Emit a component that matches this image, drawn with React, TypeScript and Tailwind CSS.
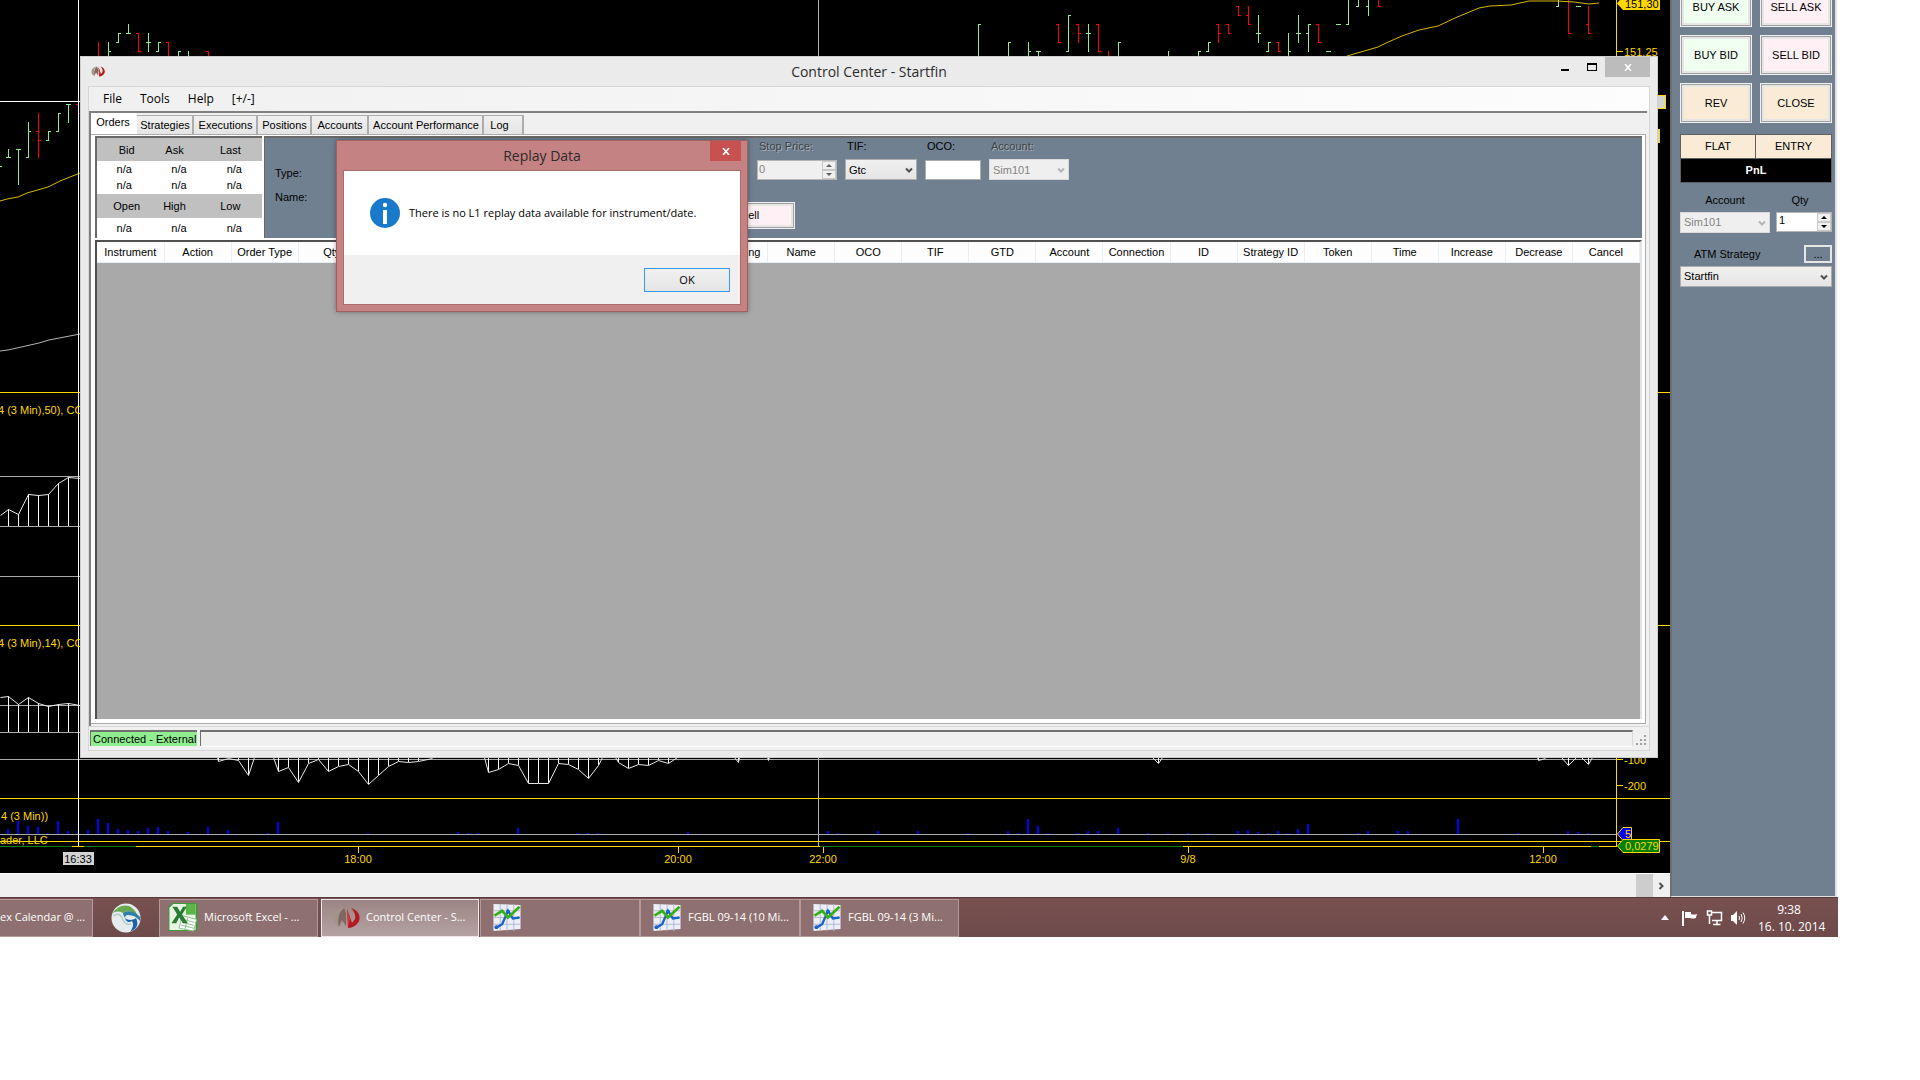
import React from "react";

type Bar = [number, number, number, number | null, number | null, "g" | "r"];

/* x, high, low, open tick, close tick, direction */
const BARS: Bar[] = [
  [-1, 166, 167, null, 166, "g"],
  [8, 149, 158, 157, 157, "g"],
  [18, 149, 185, 149, 149, "g"],
  [28, 122, 158, 157, 131, "g"],
  [38, 113, 158, 131, 140, "r"],
  [48, 131, 141, 140, 131, "g"],
  [58, 113, 132, 131, 113, "g"],
  [68, 104, 123, 104, 104, "g"],
  [78, 104, 113, 104, 113, "r"],
  [98, 42, 58, null, null, "r"],
  [108, 42, 58, null, 51, "g"],
  [118, 33, 43, 42, 33, "g"],
  [128, 24, 34, 33, 33, "g"],
  [138, 33, 52, 33, 51, "r"],
  [148, 33, 52, 42, 42, "g"],
  [158, 42, 52, 51, 42, "g"],
  [168, 42, 58, 42, null, "r"],
  [178, 51, 58, null, 51, "g"],
  [188, 51, 58, null, null, "g"],
  [208, 51, 58, 51, null, "r"],
  [978, 24, 58, null, 24, "g"],
  [1008, 42, 58, null, 42, "g"],
  [1028, 42, 58, null, 51, "g"],
  [1038, 51, 58, 51, 51, "g"],
  [1058, 24, 43, 24, 42, "r"],
  [1068, 15, 52, 51, 15, "g"],
  [1078, 24, 43, 24, 33, "r"],
  [1088, 24, 52, 33, 33, "g"],
  [1098, 24, 52, 24, 51, "r"],
  [1108, 51, 58, null, null, "r"],
  [1118, 42, 58, null, 42, "g"],
  [1168, 51, 58, null, null, "g"],
  [1198, 51, 58, null, 51, "g"],
  [1208, 42, 52, 51, 42, "g"],
  [1218, 24, 43, 24, 33, "r"],
  [1228, 24, 34, 24, 33, "r"],
  [1238, 6, 16, 6, 15, "r"],
  [1248, 6, 25, 15, 24, "r"],
  [1258, 15, 43, 33, 33, "g"],
  [1268, 42, 52, 51, 42, "g"],
  [1278, 42, 52, 42, 51, "r"],
  [1288, 33, 58, null, 51, "g"],
  [1298, 15, 43, 33, 33, "g"],
  [1308, 24, 52, 33, 24, "g"],
  [1318, 24, 43, 24, 42, "r"],
  [1328, 51, 52, 51, 51, "g"],
  [1338, 24, 25, 24, 24, "g"],
  [1348, -5, 25, 24, null, "g"],
  [1358, -5, 7, 6, null, "g"],
  [1368, -5, 16, 6, null, "g"],
  [1378, -5, 7, null, 6, "r"],
  [1558, -5, 7, 6, null, "g"],
  [1568, -5, 34, null, 33, "r"],
  [1578, 6, 7, 6, 6, "g"],
  [1588, 6, 34, 24, 33, "r"],
];

const VOLUME: [number, number][] = [
  [8, 5], [18, 13], [28, 8], [38, 7], [48, 1], [58, 13], [68, 3], [78, 3], [88, 4], [98, 15],
  [108, 11], [118, 5], [128, 4], [138, 3], [148, 6], [158, 7], [168, 3], [188, 2], [208, 7], [228, 4],
  [268, 1], [278, 12], [368, 1], [458, 2], [468, 1], [478, 1], [518, 6], [578, 1], [588, 1], [598, 1],
  [688, 2], [828, 3], [838, 1], [878, 3], [918, 3], [968, 1], [1008, 3], [1018, 1], [1028, 15], [1038, 8],
  [1048, 1], [1078, 1], [1088, 3], [1098, 3], [1118, 6], [1148, 1], [1168, 1], [1188, 1], [1208, 1],
  [1238, 3], [1248, 4], [1258, 2], [1268, 1], [1278, 3], [1288, 1], [1298, 5], [1308, 10], [1358, 1],
  [1368, 3], [1398, 3], [1408, 3], [1458, 15], [1518, 1], [1568, 3], [1578, 2], [1588, 1],
];

type Pt = [number, number];

const UPPER: Pt[] = [[0, 515], [8, 509], [18, 514], [28, 494], [38, 495], [48, 494], [58, 483], [68, 477], [80, 478]];
const MIDDLE: Pt[] = [[0, 697], [8, 696], [18, 704], [28, 697], [38, 703], [48, 706], [58, 704], [68, 703], [80, 705]];
const LOWER: Pt[][] = [
  [[217, 757], [218, 761], [228, 758], [238, 760], [248, 775], [254, 757]],
  [[273, 757], [278, 771], [288, 767], [298, 782], [308, 763], [318, 759], [328, 771], [338, 766], [348, 764], [358, 771], [368, 784], [378, 775], [388, 766], [398, 761], [408, 762], [418, 761], [432, 758]],
  [[484, 757], [488, 772], [498, 769], [508, 763], [518, 765], [528, 783], [538, 783], [548, 783], [558, 763], [568, 764], [578, 769], [588, 778], [598, 765], [602, 757]],
  [[615, 757], [618, 762], [628, 768], [638, 764], [648, 765], [658, 760], [668, 763], [677, 757]],
  [[734, 757], [738, 762], [739, 757]],
  [[767, 757], [768, 760], [769, 757]],
  [[1152, 757], [1158, 763], [1162, 757]],
  [[1537, 757], [1538, 760], [1545, 758]],
  [[1561, 757], [1568, 765], [1576, 757]],
  [[1581, 757], [1588, 764], [1592, 757]],
];

const TIMES: [number, string][] = [[358, "18:00"], [678, "20:00"], [823, "22:00"], [1188, "9/8"], [1543, "12:00"]];

const points = (list: Pt[]) => list.map(([x, y]) => `${x + 0.5},${y + 0.5}`).join(" ");

function Stems({ list, base }: { list: Pt[]; base: number }) {
  return (
    <>
      {list
        .filter(([x]) => x % 10 === 8)
        .map(([x, y]) => (
          <rect key={x} x={x} y={Math.min(y, base)} width="1" height={Math.abs(base - y)} fill="#fff" />
        ))}
    </>
  );
}

function Chart() {
  return (
    <svg
      className="block h-full w-full"
      viewBox="0 0 1670 873"
      preserveAspectRatio="xMinYMin slice"
      fontFamily='"Liberation Sans", Arial, sans-serif'
      fontSize="11"
      fill="#ffd700"
      aria-label="Price chart"
    >
      <rect width="1670" height="873" fill="#000" />
      <g shapeRendering="crispEdges">
        {BARS.map(([x, hi, lo, open, close, dir]) => {
          const fill = dir === "g" ? "#90ee90" : "#ff0000";
          return (
            <g key={x} fill={fill}>
              <rect x={x} y={hi} width="1" height={lo - hi} />
              {open !== null && <rect x={x - 2} y={open} width="3" height="1" />}
              {close !== null && <rect x={x} y={close} width="3" height="1" />}
            </g>
          );
        })}
        <rect x="818" y="0" width="1" height="846" fill="#b4b4b4" />
        <rect x="0" y="392" width="1670" height="1" />
        <rect x="0" y="625" width="1670" height="1" />
        {[476, 526, 576, 705, 732, 759, 834].map((y) => (
          <rect key={y} x="0" y={y} width="1616" height="1" fill="#a9a9a9" />
        ))}
        <Stems list={UPPER} base={526} />
        <Stems list={MIDDLE} base={732} />
        {LOWER.map((list, i) => (
          <Stems key={i} list={list} base={757} />
        ))}
        {VOLUME.map(([x, h]) => (
          <rect key={x} x={x - 1} y={834 - h} width="2" height={h} fill="#0000ff" />
        ))}
      </g>
      <g fill="none" stroke="#e6e6e6">
        <polyline points={points(UPPER)} />
        <polyline points={points(MIDDLE)} />
        {LOWER.map((list, i) => (
          <polyline key={i} points={points(list)} />
        ))}
        <polyline points="0,351 8,350 39,343 49,340 80,334" stroke="#b4b4b4" />
        <polyline points="0,201 7,199 18,197 27,193 48,187 60,181 80,173" stroke="#d8b800" />
        <polyline
          points="1347,56 1378,47 1386,43 1402,36 1419,30 1438,26 1455,18 1479,8 1490,6 1511,5 1529,1 1557,1 1574,2 1589,4 1599,3"
          stroke="#d8b800"
        />
      </g>
      <g shapeRendering="crispEdges">
        <rect x="0" y="798" width="1670" height="1" />
        <rect x="0" y="841" width="1670" height="1" />
        <rect x="0" y="846" width="1617" height="1" />
        <rect x="0" y="846" width="72" height="1" fill="#008000" />
        <rect x="84" y="846" width="52" height="1" fill="#008000" />
        <rect x="820" y="846" width="363" height="1" fill="#008000" />
        <rect x="1591" y="846" width="8" height="1" fill="#008000" />
        <rect x="1616" y="0" width="1" height="847" />
        {[51, 759, 785].map((y) => (
          <rect key={y} x="1617" y={y} width="6" height="1" />
        ))}
        {TIMES.map(([x]) => (
          <rect key={x} x={x} y="847" width="1" height="6" />
        ))}
        <rect x="78" y="0" width="1" height="846" fill="#fff" />
        <rect x="0" y="101" width="1616" height="1" fill="#fff" />
        <rect x="1640" y="95" width="25" height="13" fill="#d3d3d3" stroke="#ffd700" />
        <rect x="1640" y="129" width="19" height="13" fill="#d3d3d3" stroke="#ffd700" />
        <rect x="63" y="852" width="31" height="13" fill="#d3d3d3" />
      </g>
      <path d="M1617 3.500L1623 -4H1660V10H1623Z" />
      <path d="M1617.500 834L1623 827.500H1631.500V840.500H1623Z" fill="#0000ff" stroke="#ffd700" />
      <path d="M1617.500 846L1623 839.500H1659.500V852.500H1623Z" fill="#008000" stroke="#ffd700" />
      <text x="1625" y="8" fill="#000">151,30</text>
      <text x="1624" y="56">151,25</text>
      <text x="1624" y="764">-100</text>
      <text x="1624" y="790">-200</text>
      <text x="1625" y="838">5</text>
      <text x="1625" y="850">0,0279</text>
      <text x="-2" y="414">4 (3 Min),50), CO</text>
      <text x="-2" y="647">4 (3 Min),14), CO</text>
      <text x="1" y="820">4 (3 Min))</text>
      <text x="0" y="844">ader, LLC</text>
      <text x="78" y="863" textAnchor="middle" fill="#000">16:33</text>
      {TIMES.map(([x, label]) => (
        <text key={x} x={x} y="863" textAnchor="middle">{label}</text>
      ))}
    </svg>
  );
}

function NinjaLogo({ className }: { className: string }) {
  return (
    <svg viewBox="0 0 28 22" className={className} aria-hidden="true">
      <path d="M7 20C1 17 -1 11 3 6C5 3 8 1 12 1C7 4 4 10 7 20Z" fill="#a3948b" />
      <path d="M12 1L14 6V19L10 13L7 20C5 12 7 5 12 1Z" fill="#7c6a60" />
      <path d="M15 2L20 16L23 12C24 8 22 4 19 1C26 3 29 9 27 14C25 18 21 21 16 21Z" fill="#b5191f" />
      <path d="M15 2L18 12L16 21Z" fill="#d83a3e" />
    </svg>
  );
}

function Chevron({ className }: { className: string }) {
  return (
    <svg viewBox="0 0 8 7" className={className} aria-hidden="true">
      <path d="M1 1.500L4 4.500L7 1.500" fill="none" stroke="currentColor" strokeWidth="2" />
    </svg>
  );
}

function Select({ id, value, disabled }: { id: string; value: string; disabled?: boolean }) {
  return (
    <div className={disabled ? "relative text-[#b4b4b4]" : "relative text-[#505050]"}>
      <select
        id={id}
        disabled={disabled}
        defaultValue={value}
        className={
          disabled
            ? "block h-[21px] w-full appearance-none border border-[#d9d9d9] bg-[#efefef] pl-[3px] text-[11px] text-[#838383] opacity-100"
            : "block h-[21px] w-full appearance-none border border-[#acacac] bg-linear-to-b from-[#f0f0f0] to-[#e5e5e5] pl-[3px] text-[11px] text-black"
        }
      >
        <option>{value}</option>
      </select>
      <Chevron className="pointer-events-none absolute top-[8px] right-[4px] h-[7px] w-[8px]" />
    </div>
  );
}

function Spinner({ id, value, disabled }: { id: string; value: string; disabled?: boolean }) {
  return (
    <div
      className={
        disabled
          ? "flex h-[20px] border border-[#b4b4b4] bg-[#f0f0f0] text-[#606060]"
          : "flex h-[20px] border border-[#b4b4b4] bg-white text-black"
      }
    >
      <input
        id={id}
        disabled={disabled}
        defaultValue={value}
        className={disabled ? "min-w-0 flex-1 pb-[3px] pl-px text-[11px] text-[#838383]" : "min-w-0 flex-1 pb-[3px] pl-[2px] text-[11px]"}
      />
      <div className="flex w-[14px] flex-col">
        <button aria-label="Increase" disabled={disabled} className="flex flex-1 items-center justify-center border border-[#c8c8c8] bg-[#f0f0f0]">
          <svg viewBox="0 0 6 3" className="h-[3px] w-[6px]"><path d="M0 3L3 0L6 3Z" fill="currentColor" /></svg>
        </button>
        <button aria-label="Decrease" disabled={disabled} className="flex flex-1 items-center justify-center border border-[#c8c8c8] bg-[#f0f0f0]">
          <svg viewBox="0 0 6 3" className="h-[3px] w-[6px]"><path d="M0 0L3 3L6 0Z" fill="currentColor" /></svg>
        </button>
      </div>
    </div>
  );
}

const TABS: [string, string][] = [
  ["Strategies", "w-[57px]"],
  ["Executions", "w-[64px]"],
  ["Positions", "w-[54px]"],
  ["Accounts", "w-[57px]"],
  ["Account Performance", "w-[115px]"],
  ["Log", "w-[40px]"],
];

const COLUMNS = [
  "Instrument", "Action", "Order Type", "Qty", "", "", "", "", "", "Remaining", "Name", "OCO", "TIF", "GTD",
  "Account", "Connection", "ID", "Strategy ID", "Token", "Time", "Increase", "Decrease", "Cancel",
];

function Quotes() {
  return (
    <table className="h-full w-[167px] shrink-0 table-fixed border-t-2 border-l-2 border-[#696969] bg-white text-center leading-[14px]">
      <tbody>
        <tr className="h-[24px] bg-[#c0c0c0]">
          <th className="pl-[5px] font-normal">Bid</th>
          <th className="pr-[9px] font-normal">Ask</th>
          <th className="pr-[8px] font-normal">Last</th>
        </tr>
        <tr className="h-[16px]"><td>n/a</td><td>n/a</td><td>n/a</td></tr>
        <tr className="h-[16px]"><td>n/a</td><td>n/a</td><td>n/a</td></tr>
        <tr className="h-[24px] bg-[#c0c0c0]">
          <th className="pl-[5px] font-normal">Open</th>
          <th className="pr-[9px] font-normal">High</th>
          <th className="pr-[8px] font-normal">Low</th>
        </tr>
        <tr className="h-[20px]"><td>n/a</td><td>n/a</td><td>n/a</td></tr>
      </tbody>
    </table>
  );
}

function OrderEntry() {
  return (
    <form className="ml-[2px] flex flex-1 border-t-2 border-l border-[#696969] bg-[#708090]" onSubmit={(e) => e.preventDefault()}>
      <div className="flex w-[440px] shrink-0 flex-col gap-[8px] pt-[27px] pl-[10px] leading-4">
        <span>Type:</span>
        <span>Name:</span>
      </div>
      <div>
        <div className="flex items-end gap-[8px] pl-[52px] leading-4">
          <div className="w-[80px]">
            <label htmlFor="stop" className="block pb-[6px] pl-[2px] text-[#404448] [text-shadow:1px_1px_0_#a8b0b8]">Stop Price:</label>
            <Spinner id="stop" value="0" disabled />
          </div>
          <div className="w-[72px]">
            <label htmlFor="tif" className="block pb-[5px] pl-[2px]">TIF:</label>
            <Select id="tif" value="Gtc" />
          </div>
          <div className="w-[56px]">
            <label htmlFor="oco" className="block pb-[6px] pl-[2px]">OCO:</label>
            <input id="oco" className="block h-[20px] w-full border border-[#acacac] bg-white px-1" />
          </div>
          <div className="w-[80px]">
            <label htmlFor="account" className="block pb-[5px] pl-[2px] text-[#404448] [text-shadow:1px_1px_0_#a8b0b8]">Account:</label>
            <Select id="account" value="Sim101" disabled />
          </div>
        </div>
        <button className="mt-[22px] h-[27px] w-[90px] border border-[#f0f0f0] bg-[#fff0f5] shadow-[inset_0_0_0_1px_#a0a0a0,inset_0_0_0_3px_#e6e6e6]">Sell</button>
      </div>
    </form>
  );
}

function ControlCenter() {
  return (
    <section className="absolute top-[56px] right-[12px] bottom-[115px] left-[80px] flex flex-col border border-[#cfcfcf] bg-[#ebebeb] px-[7px] pb-[6px]">
      <header className="grid h-[29px] shrink-0 grid-cols-[1fr_auto_1fr]">
        <NinjaLogo className="mt-[9px] ml-[3px] h-[11px] w-[14px]" />
        <h1 className="pt-[4px] font-['Open_Sans',sans-serif] text-[14px] leading-[22px] text-[#2b2b2b]">Control Center - Startfin</h1>
        <div className="flex items-start justify-end">
          <button aria-label="Minimize" className="flex h-[20px] w-[27px] items-center justify-center">
            <span className="mt-[6px] h-[2px] w-[8px] bg-black" />
          </button>
          <button aria-label="Maximize" className="flex h-[20px] w-[27px] items-center justify-center">
            <span className="h-[8px] w-[10px] border border-t-2 border-black" />
          </button>
          <button aria-label="Close" className="flex h-[20px] w-[45px] items-center justify-center bg-[#bcbcbc]">
            <svg viewBox="0 0 8 7" className="h-[7px] w-[8px]"><path d="M1 0L7 7M7 0L1 7" stroke="#fff" strokeWidth="1.600" /></svg>
          </button>
        </div>
      </header>
      <div className="flex min-h-0 flex-1 flex-col border border-[#d6d6d6] bg-[#f0f0f0]">
        <nav className="flex h-[24px] shrink-0 items-center gap-[18px] bg-linear-to-r from-[#f0f0f0] to-[#fdfdfd] pl-[14px] font-['Open_Sans',sans-serif] text-[12px]">
          <button>File</button>
          <button>Tools</button>
          <button>Help</button>
          <button>[+/-]</button>
        </nav>
        <div className="mr-[2px] flex min-h-0 flex-1 flex-col border-t-2 border-l-2 border-[#808080] pr-px">
          <div role="tablist" className="flex h-[21px] shrink-0 items-end">
            <button role="tab" aria-selected="true" className="h-[21px] w-[46px] bg-white pr-[2px] pb-[3px]">Orders</button>
            {TABS.map(([name, width]) => (
              <button key={name} role="tab" aria-selected="false" className={`${width} h-[19px] border-t border-r-2 border-[#acacac] bg-linear-to-b from-[#f0f0f0] to-[#e5e5e5] pl-px ${name === "Log" ? "pr-[8px]" : ""}`}>
                {name}
              </button>
            ))}
          </div>
          <div className="mb-[2px] flex min-h-0 flex-1 flex-col border-t border-r border-b border-[#acacac] bg-white pt-px pr-[3px] pb-[4px] pl-[4px]">
            <div className="flex h-[102px] shrink-0">
              <Quotes />
              <OrderEntry />
            </div>
            <div className="mt-[2px] min-h-0 flex-1 border-t-2 border-l-2 border-[#505050] border-r-2 border-r-[#e3e3e3] bg-[#a9a9a9]">
              <table className="w-full table-fixed bg-[#fdfdfd] text-center">
                <thead>
                  <tr className="h-[20px] leading-[18px]">
                    {COLUMNS.map((name, i) => (
                      <th key={i} className="border-r border-b border-[#e5eff8] p-0 font-normal whitespace-nowrap">{name}</th>
                    ))}
                  </tr>
                </thead>
              </table>
            </div>
          </div>
        </div>
        <footer className="flex h-[24px] shrink-0 items-start border-t border-[#d8d8d8] pt-[3px] pl-px">
          <span className="h-[16px] w-[107px] border-t-2 border-l border-[#707070] bg-[#90ee90] pl-[2px] leading-[15px] whitespace-nowrap">Connected - External</span>
          <span className="ml-[3px] h-[16px] flex-1 border-t-2 border-r border-l border-[#707070] border-r-[#d8d8d8] bg-[#f0f0f0] shadow-[0_1px_0_#fff]" />
          <svg viewBox="0 0 11 11" className="mt-[5px] mr-[2px] ml-[3px] h-[11px] w-[11px]" fill="#a0a0a0" aria-hidden="true">
            <path d="M8 0h2v2h-2zM8 4h2v2h-2zM4 4h2v2h-2zM8 8h2v2h-2zM4 8h2v2h-2zM0 8h2v2h-2z" />
          </svg>
        </footer>
      </div>
    </section>
  );
}

function ReplayDialog() {
  return (
    <div role="dialog" aria-labelledby="dlg-title" className="absolute top-[140px] left-[336px] w-[412px] border border-[#a06060] bg-[#c58282] px-[6px] pb-[6px] font-['Open_Sans',sans-serif] shadow-[0_0_5px_rgba(0,0,0,0.35)]">
      <header className="relative h-[29px] text-center">
        <h2 id="dlg-title" className="pt-[4px] text-[14px] leading-[22px] text-[#2b2b2b]">Replay Data</h2>
        <button aria-label="Close dialog" className="absolute top-0 right-0 flex h-[20px] w-[31px] items-center justify-center bg-[#c75050]">
          <svg viewBox="0 0 8 7" className="h-[7px] w-[8px]"><path d="M1 0L7 7M7 0L1 7" stroke="#fff" strokeWidth="1.600" /></svg>
        </button>
      </header>
      <div className="border border-[#a86a6a] bg-[#f0f0f0]">
        <div className="flex h-[84px] items-center gap-[9px] bg-white pl-[26px]">
          <svg viewBox="0 0 30 30" className="h-[30px] w-[30px]" aria-hidden="true">
            <circle cx="15" cy="15" r="15" fill="#1979ca" />
            <circle cx="15" cy="7" r="2.200" fill="#fff" />
            <rect x="13" y="12" width="4" height="14" fill="#fff" />
          </svg>
          <p className="text-[11px] whitespace-nowrap">There is no L1 replay data available for instrument/date.</p>
        </div>
        <div className="flex h-[49px] items-start justify-end pt-[13px] pr-[10px]">
          <button className="h-[24px] w-[86px] border border-[#3399ff] bg-linear-to-b from-[#f0f0f0] to-[#e5e5e5] text-[11px]">OK</button>
        </div>
      </div>
    </div>
  );
}

const PAD: [string, string][] = [
  ["BUY ASK", "bg-[#f0fff0]"],
  ["SELL ASK", "bg-[#fff0f5]"],
  ["BUY BID", "bg-[#f0fff0]"],
  ["SELL BID", "bg-[#fff0f5]"],
  ["REV", "bg-[#faebd7]"],
  ["CLOSE", "bg-[#faebd7]"],
];

function TradePanel() {
  return (
    <aside className="mr-px w-[167px] shrink-0 overflow-hidden border-r-2 border-b border-l-2 border-[#e3e3e3] border-l-[#707070] bg-[#708090] pr-[3px] pl-[8px]">
      <div className="-mt-[13px] grid grid-cols-2 gap-[8px]">
        {PAD.map(([name, fill]) => (
          <button key={name} className={`${fill} h-[40px] border border-[#f0f0f0] shadow-[inset_0_0_0_1px_#a0a0a0,inset_0_0_0_3px_#e6e6e6]`}>
            {name}
          </button>
        ))}
      </div>
      <div className="mt-[11px] grid grid-cols-2 border border-[#606060]">
        <button className="h-[23px] border-r border-[#606060] bg-[#faebd7]">FLAT</button>
        <button className="h-[23px] bg-[#faebd7]">ENTRY</button>
        <div className="col-span-2 h-[24px] border-t border-[#606060] bg-black text-center leading-[23px] font-bold text-white">PnL</div>
      </div>
      <div className="mt-[9px] flex justify-between">
        <div className="w-[90px]">
          <label htmlFor="side-account" className="block h-[20px] text-center leading-[17px]">Account</label>
          <Select id="side-account" value="Sim101" disabled />
        </div>
        <div className="w-[56px]">
          <label htmlFor="side-qty" className="block h-[20px] pr-[8px] text-center leading-[17px]">Qty</label>
          <Spinner id="side-qty" value="1" />
        </div>
      </div>
      <div className="mt-[12px] flex items-center justify-between pl-[14px]">
        <label htmlFor="atm">ATM Strategy</label>
        <button className="h-[18px] w-[28px] border-2 border-[#e6e6e6] leading-[12px]">...</button>
      </div>
      <div className="mt-[3px]">
        <Select id="atm" value="Startfin" />
      </div>
    </aside>
  );
}

function ChartIcon() {
  return (
    <svg viewBox="0 0 30 30" className="h-[29px] w-[30px] shrink-0" aria-hidden="true">
      <path d="M1 1L29 2V27L1 29Z" fill="#eceef8" />
      <path d="M1 8H29M1 15H29M1 22H29M8 1V29M15 1V29M22 1V29" stroke="#b4b8d4" fill="none" />
      <path d="M3 26L10 22L16 8L21 16L28 15" stroke="#1c62c8" strokeWidth="2.400" fill="none" />
      <circle cx="4" cy="25" r="2" fill="#1c62c8" />
      <circle cx="16" cy="9" r="2" fill="#1c62c8" />
      <path d="M2 13L10 8L16 15L28 4" stroke="#35b112" strokeWidth="2.800" fill="none" />
    </svg>
  );
}

function ExcelIcon() {
  return (
    <svg viewBox="0 0 30 30" className="h-[29px] w-[30px] shrink-0" aria-hidden="true">
      <path d="M4 0H28Q30 0 30 2V28Q30 29 28 29H0V4Z" fill="#3c9a3c" />
      <path d="M5 1H28V28H1V5Z" fill="#e8f5e4" />
      <path d="M18 1H28V12H18Z" fill="#58b548" />
      <path d="M14 13L29 17L26 29L11 26Z" fill="#fff" stroke="#8cc488" />
      <path d="M15 17L27 20M14 20L26 23M13 23L26 26M20 15L17 27" stroke="#8cc488" fill="none" />
      <path d="M4 4H9L12 9L15 4H19L14 12L20 21H15L11 15L8 21H3L9 12Z" fill="#2a7d34" />
    </svg>
  );
}

function AnyConnectIcon() {
  return (
    <svg viewBox="0 0 30 30" className="h-[30px] w-[30px]" aria-hidden="true">
      <circle cx="15" cy="15" r="14.500" fill="#e4ecee" />
      <path d="M1 11C6 3 15 0 21 5C24 7 26 10 26 13C22 8 17 7 12 10C8 8 4 8 1 11Z" fill="#6aa84f" />
      <path d="M12 10C17 7 24 8 29 14V18C26 14 22 12 17 12C15 12 14 13 14 15C13 13 12 12 12 10Z" fill="#2f7fa8" />
      <path d="M14 15C15 19 18 20 21 18C23 21 22 25 19 29L24 26C27 23 27 19 25 15C23 17 17 18 14 15Z" fill="#1b64ad" />
      <path d="M2 13C8 9 11 13 12 17C14 21 17 22 20 21" fill="none" stroke="#b4cccc" strokeWidth="1.500" />
    </svg>
  );
}

const TASK = "flex h-[38px] shrink-0 items-center gap-[6px] border border-[#b39a9a] bg-[#8e7070] px-[8px] text-left whitespace-nowrap";

function Taskbar() {
  return (
    <footer className="flex h-[40px] items-center border-t border-[#5a3a3a] bg-linear-to-b from-[#775150] to-[#6f4a4a] font-['Open_Sans',sans-serif] text-white">
      <button className="h-[38px] w-[93px] shrink-0 border border-l-0 border-[#b39a9a] bg-[#8e7070] text-left whitespace-nowrap">ex Calendar @ ...</button>
      <button aria-label="AnyConnect" className="flex w-[66px] shrink-0 justify-center"><AnyConnectIcon /></button>
      <button className={`${TASK} w-[159px]`}><ExcelIcon />Microsoft Excel - ...</button>
      <button className="ml-[3px] flex h-[38px] w-[158px] shrink-0 items-center gap-[6px] border border-[#f0e8e8] bg-linear-to-b from-[#9c8484] to-[#b4a2a2] pl-[10px] whitespace-nowrap">
        <NinjaLogo className="h-[22px] w-[28px] shrink-0" />
        Control Center - S...
      </button>
      <button aria-label="NinjaTrader chart" className={`${TASK} ml-px w-[160px] pl-[11px]`}><ChartIcon /></button>
      <button className={`${TASK} w-[160px] pl-[11px]`}><ChartIcon />FGBL 09-14 (10 Mi...</button>
      <button className={`${TASK} w-[159px] pl-[11px]`}><ChartIcon />FGBL 09-14 (3 Mi...</button>
      <div className="ml-auto flex items-center pr-[18px]">
        <button aria-label="Show hidden icons" className="mr-[13px]">
          <svg viewBox="0 0 8 5" className="h-[5px] w-[8px]"><path d="M0 5L4 0L8 5Z" fill="#f4f4ff" /></svg>
        </button>
        <svg viewBox="0 0 16 16" className="mr-[8px] h-[16px] w-[16px]" aria-hidden="true">
          <path d="M1 1V16" stroke="#fff" strokeWidth="2" />
          <path d="M3 2H9V4Q11 5 15 4Q14 7 14 8Q11 9 8 8H3Z" fill="#fff" />
        </svg>
        <svg viewBox="0 0 17 16" className="mr-[7px] h-[16px] w-[17px]" fill="none" stroke="#fff" aria-hidden="true">
          <path d="M6 2.500H15.500V10.500H6M11 10.500V14M7 14.500H14.500" strokeWidth="1.500" />
          <path d="M1.500 1H5.500V5H1.500ZM3.500 5V14" strokeWidth="1.500" />
        </svg>
        <svg viewBox="0 0 16 16" className="mr-[12px] h-[16px] w-[16px]" aria-hidden="true">
          <path d="M1 5H3L7 1V15L3 11H1Z" fill="#fff" />
          <path d="M9 6Q10 8 9 10M11 4Q13.500 8 11 12M13 2.500Q16.500 8 13 13.500" fill="none" stroke="#fff" />
        </svg>
        <time className="w-[62px] text-center text-[12px] leading-[17px] whitespace-nowrap">
          9:38
          <br />
          16. 10. 2014
        </time>
      </div>
    </footer>
  );
}

export default function App() {
  return (
    <div className="min-h-screen bg-white font-['Liberation_Sans',Arial,sans-serif] text-[11px] text-black">
      <main className="mr-[82px]">
        <div className="flex">
          <div className="min-w-0 flex-1">
            <div className="relative h-[873px] overflow-hidden bg-black">
              <Chart />
              <ControlCenter />
              <ReplayDialog />
            </div>
            <div className="flex h-[24px] justify-end border-t border-white bg-[#f0f0f0]">
              <span className="w-[17px] bg-[#cdcdcd]" />
              <button aria-label="Scroll right" className="flex w-[17px] items-center justify-center">
                <svg viewBox="0 0 7 8" className="h-[8px] w-[7px]"><path d="M1.500 1L4.500 4L1.500 7" fill="none" stroke="#505050" strokeWidth="2" /></svg>
              </button>
            </div>
          </div>
          <TradePanel />
        </div>
        <Taskbar />
      </main>
    </div>
  );
}
